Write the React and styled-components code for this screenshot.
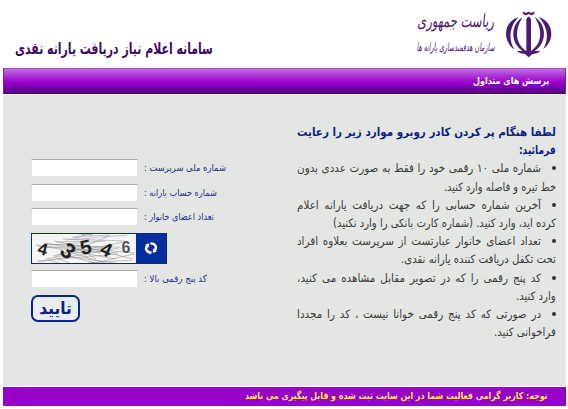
import React, { useLayoutEffect, useRef } from "react";
import styled, { createGlobalStyle } from "styled-components";

const face = `"DejaVu Sans Condensed", "DejaVu Sans", "Liberation Sans", sans-serif`;

const Global = createGlobalStyle`
  * { box-sizing: border-box; }
  body { margin: 0; background: #fff; overflow: hidden; font-family: ${face}; font-stretch: condensed; }
  p { margin: 0; }
`;
const Page = styled.div`
  direction: rtl; width: 568px; height: 409px; display: flex; flex-direction: column;
  padding: 0 2px 0 3px; background: #fff;
`;
const Header = styled.header`
  height: 68px; display: flex; align-items: flex-start; padding: 9px 12px 0 11px;
`;
const Emblem = styled.svg`
  width: 50px; height: 50px; flex: none;
`;
const Brand = styled.div`
  width: 92px; margin-right: 9px; color: #4b1a72; white-space: nowrap;
`;
const FitBox = styled.span`
  display: inline-block; width: ${(p) => p.$w}px; white-space: nowrap; vertical-align: top;
`;
const FitText = styled.span`
  display: inline-block; transform-origin: right center;
`;
const BrandTop = styled.p`
  font-family: "DejaVu Sans"; font-size: 18px; line-height: 23px; height: 26px; transform: skewX(-6deg);
`;
const BrandSub = styled.p`
  font-size: 11.5px; line-height: 24px; transform: skewX(-8deg);
`;
const Title = styled.h1`
  margin: 27px auto 0 0; width: 199px; font-size: 16px; line-height: 25px; font-weight: bold; color: #3d0d63;
`;
const Nav = styled.nav`
  height: 26px; flex: none; padding-right: 16px; color: #fff; font-size: 9.5px; font-weight: bold; line-height: 24px;
  border: 1px solid #7d1bb0; border-top-color: #a44bc8; border-bottom-color: #4a0078;
  background: linear-gradient(#c070e2, #a92fd4 30%, #9a00cc 55%, #7c00b0 75%, #540080);
`;
const Body = styled.main`
  margin-top: 1px; height: 291px; flex: none; background: #e4e6e3; display: flex; padding: 28px 10px 0 28px;
  justify-content: space-between;
`;
const Guide = styled.section`
  width: 259px; color: #3a3a3a; font-size: 11.5px;
`;
const Line = styled.p`
  height: 18.2px; line-height: 18px; white-space: nowrap; display: flex;
  color: ${(p) => (p.$head ? "#0b1f85" : "inherit")};
  font-weight: ${(p) => (p.$head ? "bold" : "normal")};
`;
const Bullet = styled.i`
  width: 4px; height: 4px; border-radius: 50%; background: #333; margin: 7px 0 0 11px; flex: none;
`;
const Words = styled.span`
  flex: 1; display: flex; justify-content: space-between;
`;
const Form = styled.form`
  direction: ltr; width: 220px; padding-top: 33px;
`;
const Row = styled.div`
  display: flex; align-items: center; height: ${(p) => p.$h || 24.6}px; gap: 6px;
`;
const Input = styled.input`
  width: 107px; height: 18px; border: 1px solid #e3e3e3; border-top-color: #a9aaa9; background: #fff; padding: 0; flex: none;
`;
const Label = styled.label`
  direction: rtl; font-size: 9.8px; color: #1c2f8c; white-space: nowrap; height: 14px; line-height: 14px;
`;
const Captcha = styled.div`
  display: flex; width: 136px; height: 31px; background: #052da0; border: 1px solid #0a2a78; margin-top: 3px;
`;
const Noise = styled.svg`
  width: 104px; height: 29px; background: #f6f6f6; flex: none;
`;
const Refresh = styled.svg`
  width: 14px; height: 14px; margin: 7px 0 0 8px;
`;
const Submit = styled.button`
  display: block; width: 49px; height: 27px; border: 2px solid #0d2488; border-radius: 7px; background: #e9edf0;
  color: #0d1f86; font-family: ${face}; font-stretch: condensed; font-weight: bold; font-size: 17px; line-height: 19px;
  padding: 0; margin-top: 0;
`;
const Footer = styled.footer`
  margin-top: 1px; height: 19px; flex: none; background: #9700c8; color: #ffe95a; font-size: 9.5px; font-weight: bold;
  line-height: 18px; padding-right: 18px;
`;

function Fit({ w, children }) {
  const ref = useRef(null);
  useLayoutEffect(() => {
    const el = ref.current;
    el.style.transform = `scaleX(${w / el.offsetWidth})`;
  }, [w, children]);
  return <FitBox $w={w}><FitText ref={ref}>{children}</FitText></FitBox>;
}

const lines = [
  { t: "لطفا هنگام پر کردن کادر روبرو موارد زیر را رعایت", full: true, head: true },
  { t: "فرمائید:", head: true, w: 37 },
  { t: "شماره ملی ۱۰ رقمی خود را فقط به صورت عددی بدون", full: true, dot: true },
  { t: "خط تیره و فاصله وارد کنید.", w: 112 },
  { t: "آخرین شماره حسابی را که جهت دریافت یارانه اعلام", full: true, dot: true },
  { t: "کرده اید، وارد کنید. (شماره کارت بانکی را وارد نکنید)", w: 223 },
  { t: "تعداد اعضای خانوار عبارتست از سرپرست بعلاوه افراد", full: true, dot: true },
  { t: "تحت تکفل دریافت کننده یارانه نقدی.", w: 155 },
  { t: "کد پنج رقمی را که در تصویر مقابل مشاهده می کنید،", full: true, dot: true },
  { t: "وارد کنید.", w: 40 },
  { t: "در صورتی که کد پنج رقمی خوانا نیست ، کد را مجددا", full: true, dot: true },
  { t: "فراخوانی کنید.", w: 62 },
];

const fields = [
  { t: "شماره ملی سرپرست :", w: 82 },
  { t: "شماره حساب یارانه :", w: 73 },
  { t: "تعداد اعضای خانوار :", w: 70 },
];

const digits = [
  ["4", 11, 21, 17, 15], ["3", 35, 24, 22, 40], ["5", 54, 20, 20, -12], ["4", 74, 22, 19, 25], ["6", 94, 19, 16, 0],
];

const scratches = Array.from({ length: 34 }, (_, i) => {
  const y = (i * 11) % 31;
  return `M${(i * 17) % 60} ${y}L${50 + ((i * 23) % 54)} ${y + ((i * 13) % 35) - 17}`;
}).join("");

export default function App() {
  return (
    <Page>
      <Global />
      <Header>
        <Emblem viewBox="12 12 150 150" fill="#4b1a72">
          <path d="M86 34L93 42V138L122 138Q110 148 97 147L86 157L75 147Q62 148 50 138L79 138V42Z" />
          <path d="M68 19Q76 27 86 20Q96 27 104 19Q104 31 94 31L86 27L78 31Q68 31 68 19Z" />
          <path d="M56 36C10 50 6 108 43 133C25 104 27 66 56 36Z" />
          <path d="M116 36C162 50 166 108 129 133C147 104 145 66 116 36Z" />
          <path d="M68 37C28 60 30 124 79 144V138C44 116 44 72 68 37Z" />
          <path d="M104 37C144 60 142 124 93 144V138C128 116 128 72 104 37Z" />
        </Emblem>
        <Brand>
          <BrandTop><Fit w={77}>ریاست جمهوری</Fit></BrandTop>
          <BrandSub><Fit w={78}>سازمان هدفمندسازی یارانه ها</Fit></BrandSub>
        </Brand>
        <Title><Fit w={198}>سامانه اعلام نیاز دریافت یارانه نقدی</Fit></Title>
      </Header>
      <Nav><Fit w={76}>پرسش های متداول</Fit></Nav>
      <Body>
        <Guide>
          {lines.map((l) => (
            <Line key={l.t} $head={l.head}>
              {l.dot && <Bullet />}
              {l.full ? <Words>{l.t.split(" ").map((w, i) => <span key={i}>{w}</span>)}</Words> : <Fit w={l.w}>{l.t}</Fit>}
            </Line>
          ))}
        </Guide>
        <Form>
          {fields.map((f) => (
            <Row key={f.t}><Input /><Label><Fit w={f.w}>{f.t}</Fit></Label></Row>
          ))}
          <Captcha>
            <Noise viewBox="0 0 104 29">
              <path d={scratches} stroke="#8a8a8a" strokeWidth=".5" fill="none" />
              {digits.map(([d, x, y, s, r], i) => (
                <text key={i} x={x} y={y} fontSize={s} textAnchor="middle" transform={`rotate(${r} ${x} ${y - 6})`}
                  fontFamily="Liberation Sans" fontWeight="bold" fill={i === 4 ? "#555" : "#222"}>{d}</text>
              ))}
            </Noise>
            <Refresh viewBox="0 0 14 14" fill="none" stroke="#fff" strokeWidth="2.4">
              <g transform="rotate(-20 7 7)">
                <path d="M6 11.5C1 10 1 5 4.5 3.5M8 2.5C13 4 13 9 9.5 10.5" />
                <path d="M3 1.5L7 2L5 6ZM11 12.5L7 12L9 8Z" fill="#fff" stroke="none" />
              </g>
            </Refresh>
          </Captcha>
          <Row $h={31}><Input /><Label><Fit w={63}>کد پنج رقمی بالا :</Fit></Label></Row>
          <Submit type="button">تایید</Submit>
        </Form>
      </Body>
      <Footer><Fit w={303}>توجه: کاربر گرامی فعالیت شما در این سایت ثبت شده و قابل پیگیری می باشد</Fit></Footer>
    </Page>
  );
}
